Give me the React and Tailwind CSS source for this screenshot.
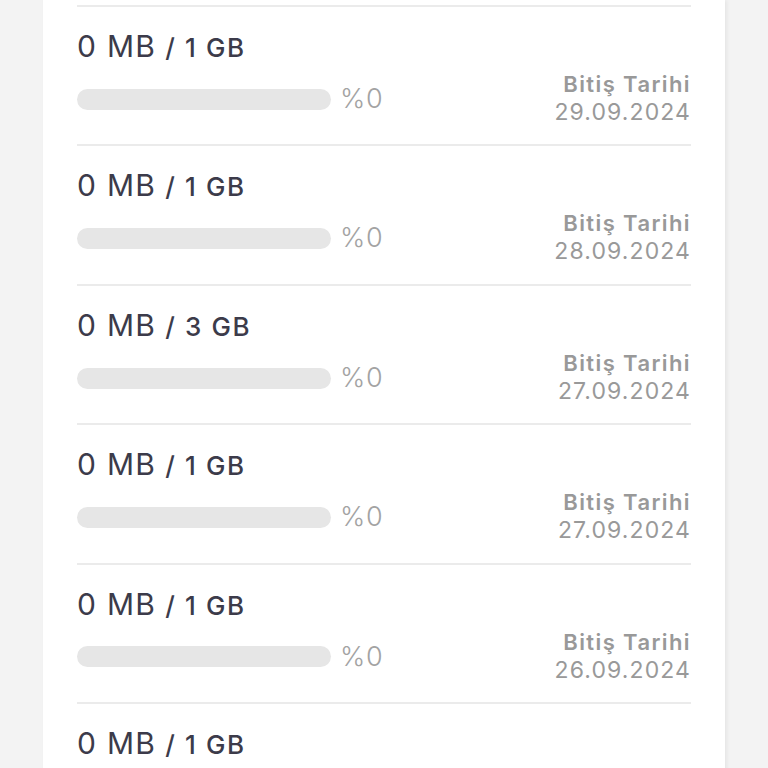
import React from 'react'

const rows = [
    { total: '1 GB', date: '29.09.2024' },
    { total: '1 GB', date: '28.09.2024' },
    { total: '3 GB', date: '27.09.2024' },
    { total: '1 GB', date: '27.09.2024' },
    { total: '1 GB', date: '26.09.2024' },
    { total: '1 GB', date: '25.09.2024' },
]

const App = () => {
    return (
        <div className="h-[768px] overflow-hidden bg-[#f3f3f3] font-['Inter',sans-serif]">
            <div className="ml-[43px] w-[682px] min-h-full bg-white pt-[5px] px-[34px] shadow-[2px_0_4px_rgba(0,0,0,0.06)]">
                {rows.map((row, idx) => (
                    <div key={idx} className="h-[139.4px] border-t-2 border-[#ebebeb] flex items-start justify-between">
                        <div className="pt-[20px]">
                            <div className="flex items-baseline text-[#3c3b4a]">
                                <span className="text-[30px] leading-[38px] tracking-[1.3px]">0 MB</span>
                                <span className="text-[26px] ml-[9px] font-medium tracking-[1.6px]">/ {row.total}</span>
                            </div>
                            <div className="mt-[12px] flex items-center">
                                <div className="h-[21px] w-[254px] rounded-full bg-[#e6e6e6]" />
                                <span className="ml-[9px] text-[27px] font-light tracking-[0.8px] text-[#a3a3a3]">%0</span>
                            </div>
                        </div>
                        <div className="pt-[63px] text-right text-[#999999] leading-[28px]">
                            <div className="text-[22px] font-semibold tracking-[1.4px]">Bitiş Tarihi</div>
                            <div className="text-[23px] tracking-[1.1px]">{row.date}</div>
                        </div>
                    </div>
                ))}
            </div>
        </div>
    )
}

export default App
